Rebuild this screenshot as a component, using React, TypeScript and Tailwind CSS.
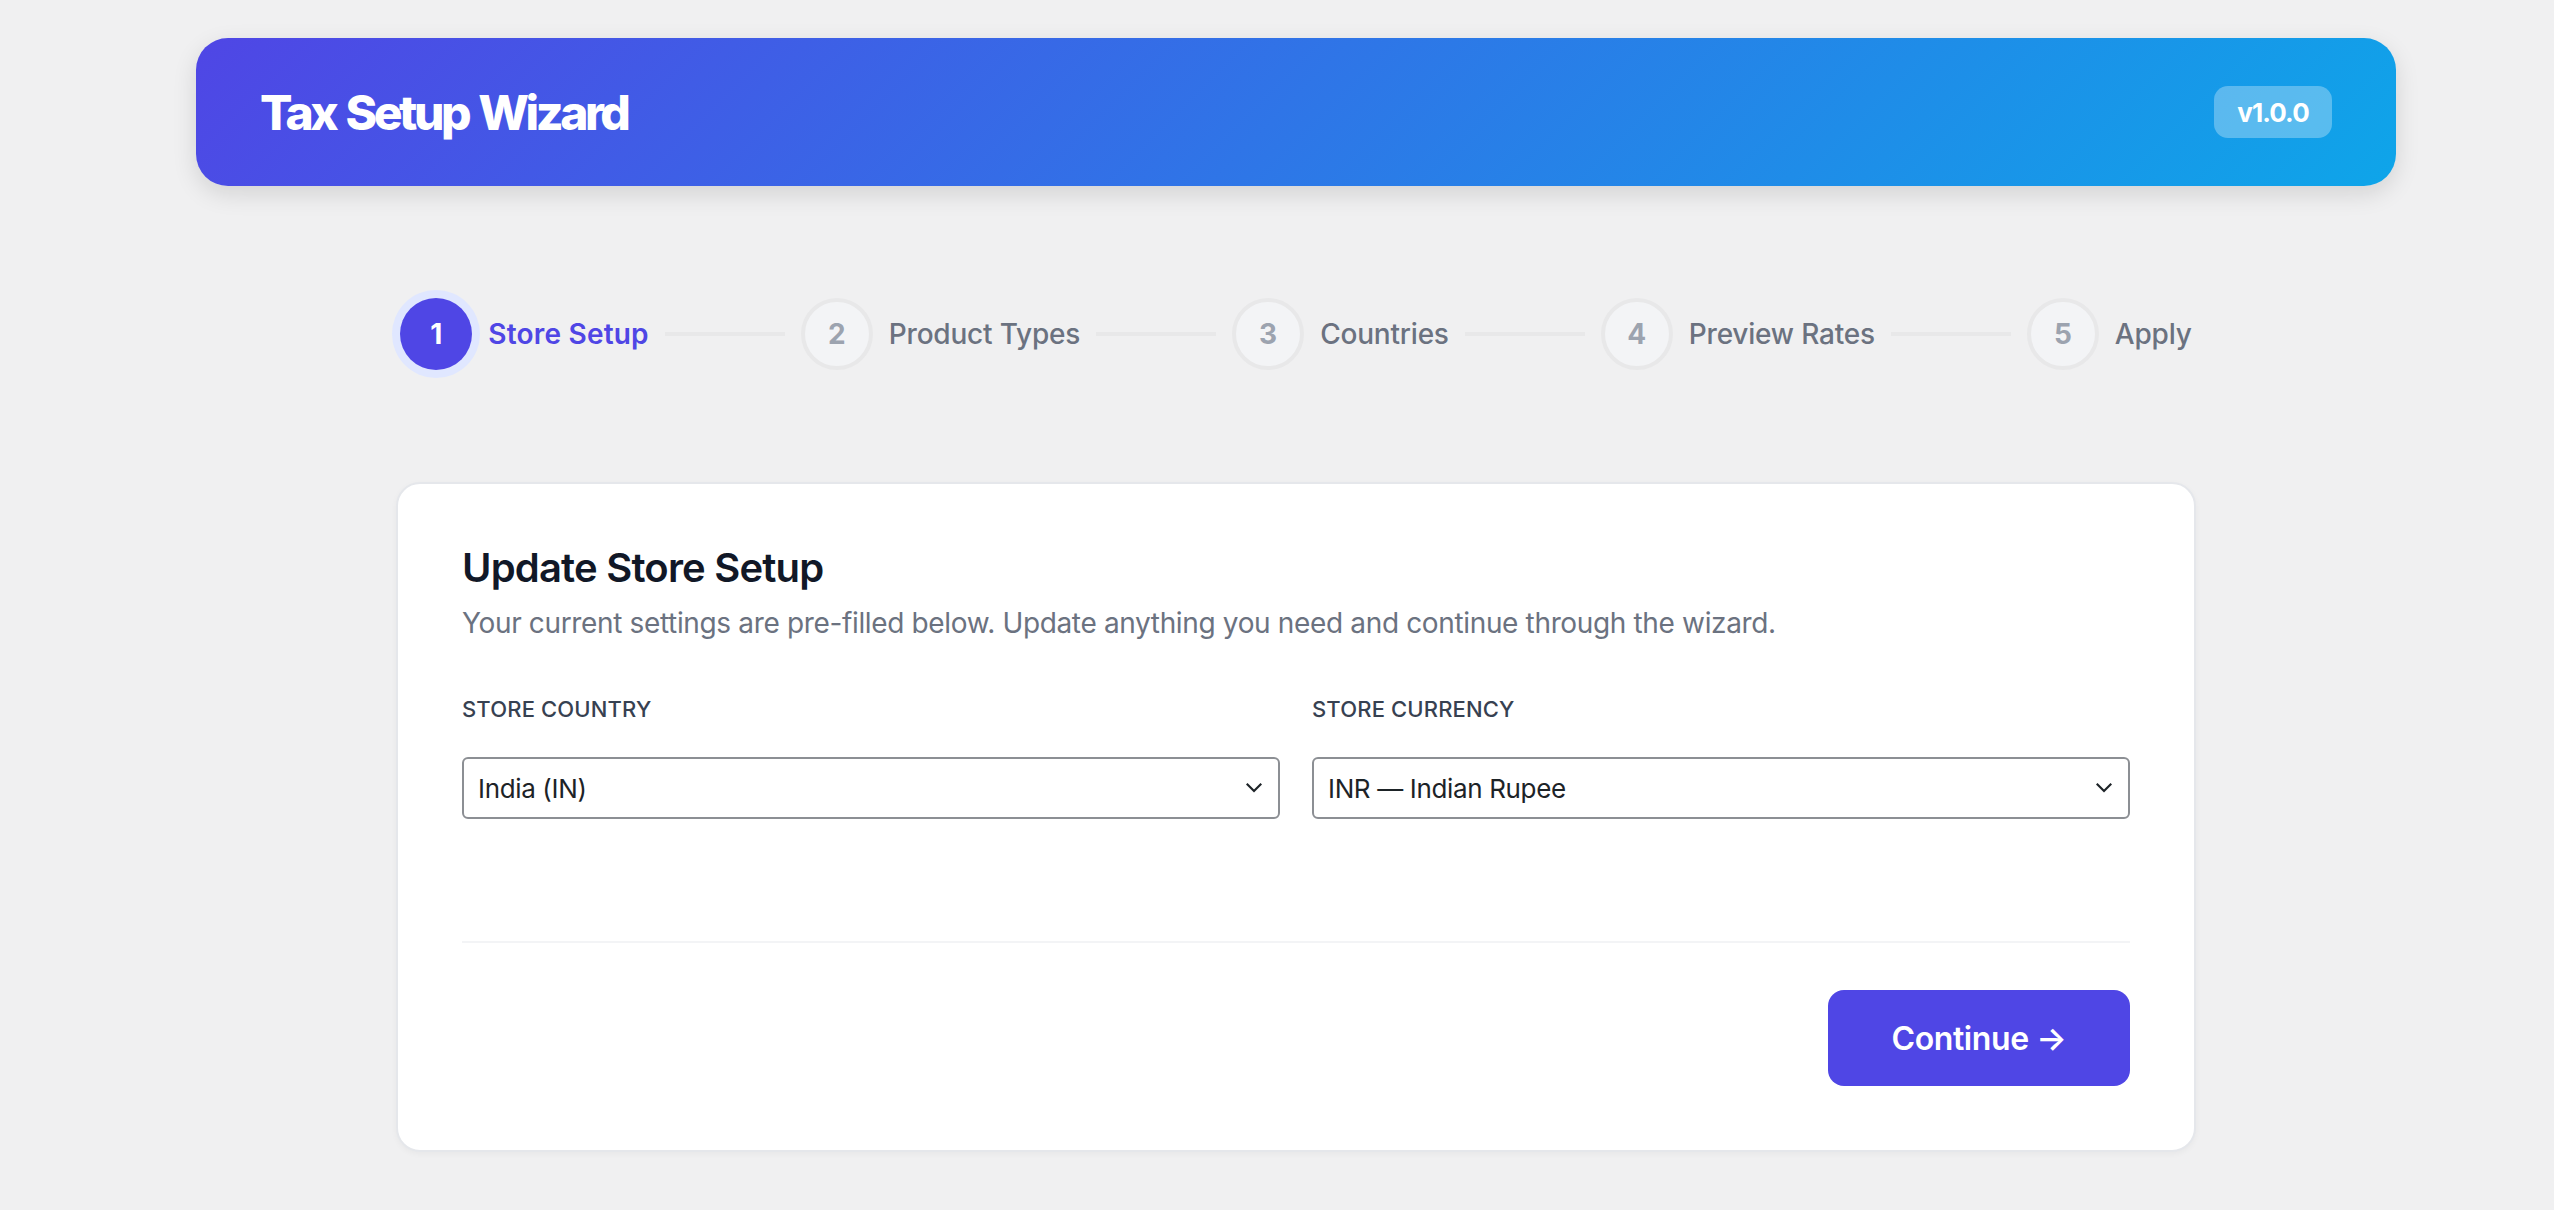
import React from "react";

const steps = ["Store Setup", "Product Types", "Countries", "Preview Rates", "Apply"];

function Chevron() {
  return (
    <svg className="pointer-events-none absolute right-[18px] top-1/2 -translate-y-1/2" width="16" height="16" viewBox="0 0 16 16" fill="none">
      <path d="M1.5 4.5 L8 11 L14.5 4.5" stroke="#1d2327" strokeWidth="2.2" strokeLinecap="square" />
    </svg>
  );
}

function Field({ label, value }: { label: string; value: string }) {
  return (
    <div className="flex flex-col gap-[32px]">
      <label className="text-[22px] leading-[32px] font-medium uppercase tracking-[0.15px] text-[#374151]">{label}</label>
      <div className="relative">
        <select
          defaultValue={value}
          className="block w-full h-[62px] appearance-none rounded-[6px] border-2 border-[#8c8f94] bg-white pl-[14px] pr-[40px] text-[26px] tracking-[-0.35px] text-[#1d2327] outline-none"
        >
          <option>{value}</option>
        </select>
        <Chevron />
      </div>
    </div>
  );
}

export default function App() {
  return (
    <div className="min-h-[1210px] bg-[#f0f0f1] pl-[196px] pt-[38px] font-['Inter',sans-serif] antialiased">
      <div className="w-[2200px]">
        <header className="flex h-[148px] items-center justify-between rounded-[32px] bg-[linear-gradient(135deg,#4f46e5_0%,#0ea5e9_100%)] px-[64px] shadow-[0_8px_24px_rgba(0,0,0,0.12)]">
          <h1 className="translate-y-[1px] text-[48px] font-extrabold leading-[56px] tracking-[-3.45px] [word-spacing:3px] text-white">Tax Setup Wizard</h1>
          <span className="flex h-[52px] w-[118px] items-center justify-center rounded-[14px] bg-white/30 text-[26px] font-bold tracking-[-0.9px] text-white">v1.0.0</span>
        </header>

        <nav className="mt-[112px] flex items-center justify-center">
          {steps.map((s, i) => (
            <div key={s} className="flex items-center">
              {i > 0 && <div className="mx-[16px] h-[4px] w-[120px] bg-[#e8e8e9]" />}
              <div className="flex items-center gap-[16px]">
                {i === 0 ? (
                  <div className="flex h-[72px] w-[72px] items-center justify-center rounded-full bg-[#4f46e5] text-[28px] font-bold text-white shadow-[0_0_0_8px_#e0e7ff]">1</div>
                ) : (
                  <div className="flex h-[72px] w-[72px] items-center justify-center rounded-full border-4 border-[#e8e8e9] bg-[#f3f4f6] text-[28px] font-bold text-[#9ca3af]">{i + 1}</div>
                )}
                <span className={i === 0 ? "text-[28px] font-semibold tracking-[0.2px] text-[#4f46e5]" : "text-[28px] font-medium tracking-[-0.2px] text-[#6b7280]"}>{s}</span>
              </div>
            </div>
          ))}
        </nav>

        <main className="mx-auto mt-[112px] h-[670px] w-[1800px] rounded-[24px] border-2 border-[#e5e7eb] bg-white p-[64px] shadow-[0_2px_6px_rgba(0,0,0,0.04)]">
          <h2 className="text-[40px] font-semibold leading-[40px] tracking-[-0.8px] text-[#111827]">Update Store Setup</h2>
          <p className="mt-[15px] text-[28px] leading-[40px] tracking-[-0.35px] text-[#6b7280]">
            Your current settings are pre-filled below. Update anything you need and continue through the wizard.
          </p>
          <div className="mt-[50px] grid grid-cols-2 gap-[32px]">
            <Field label="Store Country" value="India (IN)" />
            <Field label="Store Currency" value="INR — Indian Rupee" />
          </div>
          <div className="mt-[122px] h-[2px] bg-[#f3f4f6]" />
          <div className="mt-[47px] flex justify-end">
            <button className="h-[96px] w-[302px] rounded-[16px] bg-[#4f46e5] pt-[2px] text-[32px] font-semibold tracking-[-0.4px] text-white">Continue →</button>
          </div>
        </main>
      </div>
    </div>
  );
}
